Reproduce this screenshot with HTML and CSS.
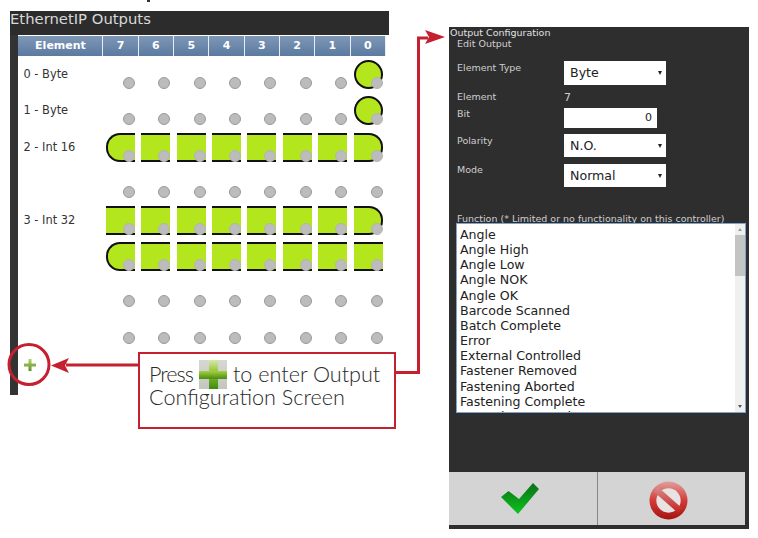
FILE: index.html
```html
<!DOCTYPE html>
<html>
<head>
<meta charset="utf-8">
<title>EthernetIP Outputs</title>
<link rel="stylesheet" href="styles.css">
</head>
<body>
<div class="canvas">
  <span class="cut-glyph"></span>
  <section class="win-left">
    <h1 class="win-left-title">EthernetIP Outputs</h1>
    <div class="win-left-body">
      <div class="strip"></div>
      <div class="content">
        <div class="thead">
          <div class="th">Element</div><div class="th">7</div><div class="th">6</div><div class="th">5</div><div class="th">4</div><div class="th">3</div><div class="th">2</div><div class="th">1</div><div class="th">0</div>
        </div>
        <div class="grid">
          <div class="lab">0 - Byte</div>
          <div class="c"><i class="dot"></i></div><div class="c"><i class="dot"></i></div><div class="c"><i class="dot"></i></div><div class="c"><i class="dot"></i></div><div class="c"><i class="dot"></i></div><div class="c"><i class="dot"></i></div><div class="c"><i class="dot"></i></div><div class="c on solo"><i class="dot"></i></div>

          <div class="lab">1 - Byte</div>
          <div class="c"><i class="dot"></i></div><div class="c"><i class="dot"></i></div><div class="c"><i class="dot"></i></div><div class="c"><i class="dot"></i></div><div class="c"><i class="dot"></i></div><div class="c"><i class="dot"></i></div><div class="c"><i class="dot"></i></div><div class="c on solo"><i class="dot"></i></div>

          <div class="lab">2 - Int 16</div>
          <div class="c on first"><i class="dot"></i></div><div class="c on"><i class="dot"></i></div><div class="c on"><i class="dot"></i></div><div class="c on"><i class="dot"></i></div><div class="c on"><i class="dot"></i></div><div class="c on"><i class="dot"></i></div><div class="c on"><i class="dot"></i></div><div class="c on last"><i class="dot"></i></div>

          <div class="lab"></div>
          <div class="c"><i class="dot"></i></div><div class="c"><i class="dot"></i></div><div class="c"><i class="dot"></i></div><div class="c"><i class="dot"></i></div><div class="c"><i class="dot"></i></div><div class="c"><i class="dot"></i></div><div class="c"><i class="dot"></i></div><div class="c"><i class="dot"></i></div>

          <div class="lab">3 - Int 32</div>
          <div class="c on"><i class="dot"></i></div><div class="c on"><i class="dot"></i></div><div class="c on"><i class="dot"></i></div><div class="c on"><i class="dot"></i></div><div class="c on"><i class="dot"></i></div><div class="c on"><i class="dot"></i></div><div class="c on"><i class="dot"></i></div><div class="c on last"><i class="dot"></i></div>

          <div class="lab"></div>
          <div class="c on first"><i class="dot"></i></div><div class="c on"><i class="dot"></i></div><div class="c on"><i class="dot"></i></div><div class="c on"><i class="dot"></i></div><div class="c on"><i class="dot"></i></div><div class="c on"><i class="dot"></i></div><div class="c on"><i class="dot"></i></div><div class="c on"><i class="dot"></i></div>

          <div class="lab"></div>
          <div class="c"><i class="dot"></i></div><div class="c"><i class="dot"></i></div><div class="c"><i class="dot"></i></div><div class="c"><i class="dot"></i></div><div class="c"><i class="dot"></i></div><div class="c"><i class="dot"></i></div><div class="c"><i class="dot"></i></div><div class="c"><i class="dot"></i></div>

          <div class="lab"></div>
          <div class="c"><i class="dot"></i></div><div class="c"><i class="dot"></i></div><div class="c"><i class="dot"></i></div><div class="c"><i class="dot"></i></div><div class="c"><i class="dot"></i></div><div class="c"><i class="dot"></i></div><div class="c"><i class="dot"></i></div><div class="c"><i class="dot"></i></div>
        </div>
      </div>
    </div>
  </section>

  <svg class="plus-small" width="12" height="12" viewBox="0 0 12 12"><defs><linearGradient id="ps" x1="0" y1="0" x2="0" y2="1"><stop offset="0" stop-color="#b5d468"/><stop offset="1" stop-color="#5a9020"/></linearGradient></defs><path d="M4.500 0h3v4.500H12v3H7.500V12h-3V7.500H0v-3h4.500z" fill="url(#ps)"/></svg>

  <svg class="wires" width="758" height="538" viewBox="0 0 758 538">
    <circle cx="29" cy="364.500" r="20" fill="none" stroke="#c4202f" stroke-width="3"/>
    <path d="M66 365H139" stroke="#c4202f" stroke-width="3" fill="none"/>
    <path d="M51 365.500L69 358L65 365.500L69 373Z" fill="#c4202f"/>
    <path d="M395 372.500H418.500V38H428" stroke="#c4202f" stroke-width="3" fill="none"/>
    <path d="M445 37L425 30L429 37L425 44Z" fill="#c4202f"/>
  </svg>

  <div class="callout">
    <div class="callout-line"><span class="press">Press</span><span class="callout-icon"><svg width="28" height="29" viewBox="0 0 28 29"><defs><linearGradient id="pv" x1="0" y1="0" x2="0" y2="1"><stop offset="0" stop-color="#d6e8a8"/><stop offset=".45" stop-color="#8fc02e"/><stop offset="1" stop-color="#3f8a10"/></linearGradient><linearGradient id="ph" x1="0" y1="0" x2="0" y2="1"><stop offset="0" stop-color="#a8d040"/><stop offset="1" stop-color="#478c12"/></linearGradient></defs><path d="M10 0h9v29h-9z" fill="url(#pv)"/><path d="M0 11h28v8H0z" fill="url(#ph)"/></svg></span><span>to enter Output</span></div>
    <div class="callout-line">Configuration Screen</div>
  </div>

  <section class="win-right">
    <div class="win-right-title">Output Configuration</div>
    <div class="edit-title">Edit Output</div>
    <div class="form">
      <div class="f-row r-type"><label class="f-label">Element Type</label><div class="sel">Byte</div></div>
      <div class="f-row r-elem"><label class="f-label">Element</label><span class="f-val">7</span></div>
      <div class="f-row r-bit"><label class="f-label">Bit</label><div class="num">0</div></div>
      <div class="f-row r-pol"><label class="f-label">Polarity</label><div class="sel">N.O.</div></div>
      <div class="f-row r-mode"><label class="f-label">Mode</label><div class="sel">Normal</div></div>
    </div>
    <div class="fn-label">Function (* Limited or no functionality on this controller)</div>
    <div class="list">
      <div class="items">
        <div>Angle</div><div>Angle High</div><div>Angle Low</div><div>Angle NOK</div><div>Angle OK</div><div>Barcode Scanned</div><div>Batch Complete</div><div>Error</div><div>External Controlled</div><div>Fastener Removed</div><div>Fastening Aborted</div><div>Fastening Complete</div><div>Fastening Started</div>
      </div>
      <div class="sb"><span class="sb-up"></span><span class="sb-thumb"></span><span class="sb-down"></span></div>
    </div>
    <div class="btns">
      <div class="btn">
        <svg width="38" height="31" viewBox="0 0 38 31"><defs><linearGradient id="gk" x1="0" y1="0" x2="0" y2="1"><stop offset="0" stop-color="#0a7018"/><stop offset="1" stop-color="#0cc41e"/></linearGradient></defs><path d="M0 14L7.500 8L18 16L32 0L38 6L17 31Z" fill="url(#gk)"/></svg>
      </div>
      <div class="btn">
        <svg class="no-icon" width="39" height="39" viewBox="0 0 40 40"><defs><linearGradient id="rd" x1="0" y1="0" x2="0" y2="1"><stop offset="0" stop-color="#e0a09c"/><stop offset=".5" stop-color="#d23c38"/><stop offset="1" stop-color="#a51210"/></linearGradient><linearGradient id="sl" x1="0" y1="0" x2="0" y2="1"><stop offset="0" stop-color="#d88c88"/><stop offset="1" stop-color="#c2201e"/></linearGradient></defs><circle cx="20" cy="20" r="19.500" fill="url(#rd)"/><circle cx="20" cy="20" r="12.500" fill="#e9e2e2"/><path d="M9 6L34 28L30 33L5 11Z" fill="url(#sl)"/></svg>
      </div>
    </div>
  </section>
</div>
</body>
</html>
```
FILE: styles.css
```css
* { box-sizing: border-box; }
html, body { margin: 0; padding: 0; background: #fff; }
.canvas { position: relative; width: 758px; height: 538px; overflow: hidden; font-family: "DejaVu Sans", sans-serif; }
.cut-glyph { position: absolute; left: 147px; top: 0; width: 3px; height: 2px; background: #333; }

.win-left { position: absolute; left: 10px; top: 11px; width: 379px; height: 384px; display: flex; flex-direction: column; }
.win-left-title { margin: 0; height: 24px; background: #2c2c2c; color: #d8d8d8; font-size: 14.8px; font-weight: normal; line-height: 16px; white-space: nowrap; }
.win-left-body { flex: 1; display: flex; }
.strip { width: 9px; background: #333; }
.content { flex: 1; background: #fff; padding-top: 1px; }
.thead { display: grid; grid-template-columns: 85px repeat(8, 35.3px); height: 20px; }
.th { background: linear-gradient(#7e97b6, #5b7aa0); color: #fff; font-size: 11px; font-weight: bold; text-align: center; line-height: 20px; border-right: 1px solid #e6edf4; }
.grid { display: grid; grid-template-columns: 87.4px repeat(8, 35.4px); grid-auto-rows: 36.4px; padding-top: 4px; }
.lab { font-size: 11.4px; color: #333; padding: 8px 0 0 5px; line-height: 13px; white-space: nowrap; }
.c { position: relative; }
.c.on { width: 29px; height: 29px; background: #b4e61e; border-top: 2px solid #111; border-bottom: 2px solid #111; }
.c.solo { border: 2px solid #111; border-radius: 50%; }
.c.first { border-left: 2px solid #111; border-radius: 14px 0 0 14px; }
.c.last { border-right: 2px solid #111; border-radius: 0 14px 14px 0; }
.dot { position: absolute; left: 17px; top: 17px; width: 12px; height: 12px; border-radius: 50%; background: #bcbcbc; border: 1px solid #9a9a9a; }
.c.on .dot { left: 17px; top: 15px; border-color: #b4b4b4; }
.c.on.first .dot, .c.on.solo .dot { left: 15px; }

.plus-small { position: absolute; left: 24px; top: 359px; }
.wires { position: absolute; left: 0; top: 0; pointer-events: none; }

.callout { position: absolute; left: 138px; top: 352px; width: 258px; height: 77px; background: #fff; border: 2px solid #c4202f; padding: 9px 0 0 9px; font-family: "Lato", sans-serif; font-size: 21.6px; font-weight: 300; line-height: 23px; color: #2a2a2a; }
.callout-line { display: flex; align-items: center; white-space: pre; }
.press { letter-spacing: -1px; width: 50px; }
.callout-icon { width: 28px; height: 29px; background: linear-gradient(#d5d9d2, #c2c6be); display: block; margin: -3px 6px -3px 0; flex: none; }
.callout-icon svg { display: block; }

.win-right { position: absolute; left: 449px; top: 27px; width: 300px; height: 502px; background: #2e2e2e; color: #cfcfcf; font-size: 9.5px; display: flex; flex-direction: column; }
.win-right-title { height: 11px; line-height: 12px; padding-left: 1px; color: #e0e0e0; white-space: nowrap; }
.edit-title { height: 12px; padding-left: 8px; line-height: 12px; }
.form { padding: 0 0 0 8px; }
.f-row { display: flex; }
.f-label { width: 107px; }
.f-val { font-size: 11px; }
.r-type { margin-top: 11px; height: 24px; }
.r-type .f-label { padding-top: 1px; }
.r-elem { margin-top: 6px; height: 17px; }
.r-bit { height: 20px; }
.r-pol { margin-top: 6px; height: 23px; }
.r-pol .f-label { padding-top: 1px; }
.r-mode { margin-top: 7px; height: 23px; }
.sel { position: relative; width: 102px; height: 100%; background: #fff; color: #222; font-size: 12.6px; line-height: 24px; padding-left: 6px; }
.sel::after { content: ""; position: absolute; right: 4px; top: 10px; border-left: 2px solid transparent; border-right: 2px solid transparent; border-top: 4px solid #222; }
.num { width: 93px; background: #fff; color: #222; font-size: 11px; text-align: right; line-height: 20px; padding-right: 5px; }
.fn-label { margin-top: 26px; height: 10px; padding-left: 8px; line-height: 12px; white-space: nowrap; }
.list { margin: 0 0 0 7px; width: 290px; height: 190px; background: #fff; border: 1px solid #7ea3cc; display: flex; overflow: hidden; }
.items { flex: 1; color: #222; font-size: 12.6px; line-height: 15.15px; padding: 3px 0 0 3px; overflow: hidden; }
.sb { width: 10px; background: #f0f0f0; position: relative; }
.sb-thumb { position: absolute; left: 0; right: 0; top: 11px; height: 41px; background: #c4c4c4; }
.sb-up, .sb-down { position: absolute; left: 3px; border-left: 2px solid transparent; border-right: 2px solid transparent; }
.sb-up { top: 4px; border-bottom: 3px solid #9a9a9a; }
.sb-down { bottom: 4px; border-top: 3px solid #555; }
.btns { margin-top: 59px; display: flex; width: 296px; height: 53px; gap: 1px; background: #888; }
.btn { flex: 1; background: #d4d4d4; display: flex; align-items: center; justify-content: center; padding-right: 5px; }
.no-icon { margin-top: 3px; }
```
